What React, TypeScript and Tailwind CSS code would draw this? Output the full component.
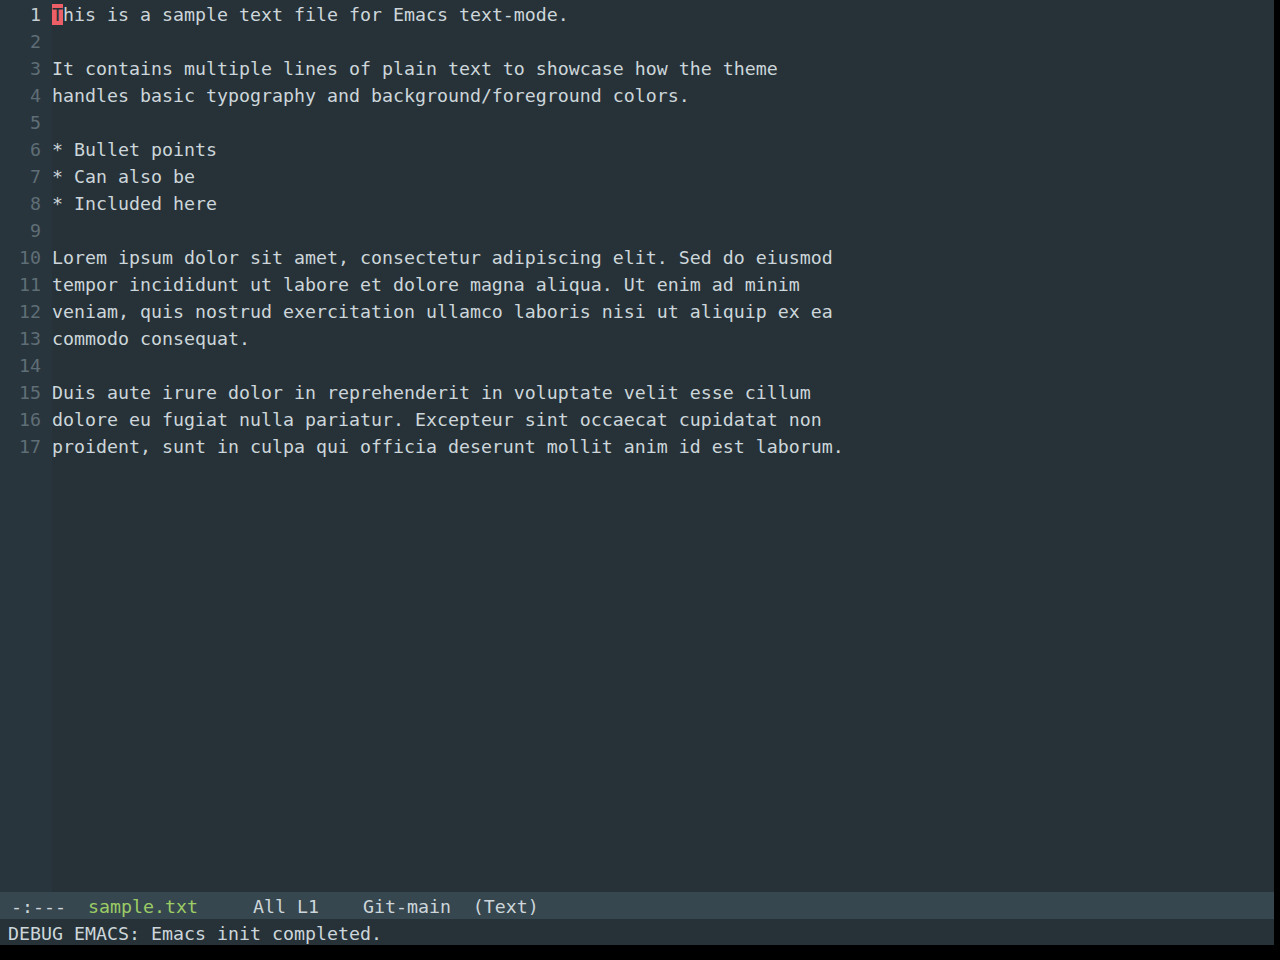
import React from "react";

const LINES = [
  "This is a sample text file for Emacs text-mode.",
  "",
  "It contains multiple lines of plain text to showcase how the theme",
  "handles basic typography and background/foreground colors.",
  "",
  "* Bullet points",
  "* Can also be",
  "* Included here",
  "",
  "Lorem ipsum dolor sit amet, consectetur adipiscing elit. Sed do eiusmod",
  "tempor incididunt ut labore et dolore magna aliqua. Ut enim ad minim",
  "veniam, quis nostrud exercitation ullamco laboris nisi ut aliquip ex ea",
  "commodo consequat.",
  "",
  "Duis aute irure dolor in reprehenderit in voluptate velit esse cillum",
  "dolore eu fugiat nulla pariatur. Excepteur sint occaecat cupidatat non",
  "proident, sunt in culpa qui officia deserunt mollit anim id est laborum.",
];

const mono = "font-['DejaVu_Sans_Mono',monospace] text-[18.27px] leading-[27px]";

export default function App() {
  return (
    <div className={`w-[1280px] h-[960px] bg-black flex flex-col ${mono}`}>
      {/* buffer */}
      <div className="flex h-[892px] w-[1274px] bg-[#263238]">
        <div className="w-[52px] bg-[#29353d] flex flex-col items-end pr-[11px] pt-[1px]">
          {LINES.map((_, i) => (
            <div key={i} className={i === 0 ? "text-[#c5cdd1]" : "text-[#5f6e76]"}>
              {i + 1}
            </div>
          ))}
        </div>
        <div className="flex-1 flex flex-col text-[#cdd6da] whitespace-pre pt-[1px]">
          {LINES.map((line, i) => (
            <div key={i} className="h-[27px]">
              {i === 0 ? (
                <>
                  <span className="bg-[#ec5f67] text-[#263238]">T</span>
                  {line.slice(1)}
                </>
              ) : (
                line
              )}
            </div>
          ))}
        </div>
      </div>

      {/* mode line */}
      <div className="h-[27px] shrink-0 overflow-hidden pt-[1px] w-[1274px] bg-[#37474f] text-[#cdd6da] whitespace-pre pl-[11px]">
        {"-:---  "}
        <span className="text-[#9ccc65]">sample.txt</span>
        {"     All L1    Git-main  (Text)"}
      </div>

      {/* echo area */}
      <div className="h-[26px] shrink-0 overflow-hidden pt-[1px] w-[1274px] bg-[#263238] text-[#cdd6da] whitespace-pre pl-[8px]">
        DEBUG EMACS: Emacs init completed.
      </div>
    </div>
  );
}
